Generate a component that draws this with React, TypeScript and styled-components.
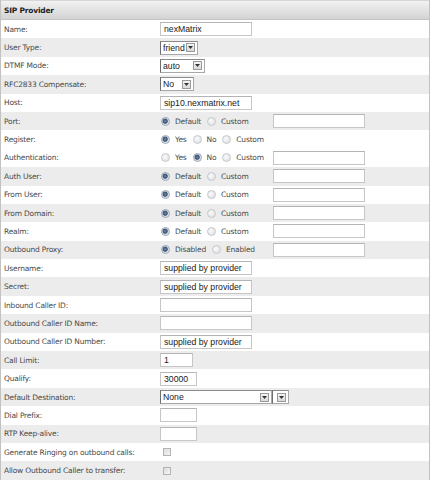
import React from "react";
import styled, { createGlobalStyle } from "styled-components";

const GlobalStyle = createGlobalStyle`
  html, body { margin: 0; padding: 0; background: #ffffff; }
  body { font-family: "DejaVu Sans", Verdana, sans-serif; }
`;

const Panel = styled.div`
  width: 430px;
  box-sizing: border-box;
  border-left: 1px solid #c2c2c2;
  border-right: 1px solid #c2c2c2;
  background: #ffffff;
`;

const Header = styled.div`
  height: 20px;
  box-sizing: border-box;
  display: flex;
  align-items: center;
  padding-left: 3px;
  border-top: 1px solid #d6d6d6;
  border-bottom: 1px solid #c4c4c4;
  background: linear-gradient(#f2f2f2, #d3d3d3);
  font-family: "DejaVu Sans", Verdana, sans-serif;
  font-weight: bold;
  font-size: 7.5px;
  letter-spacing: -0.2px;
  color: #1e1e1e;
`;

const Row = styled.div<{ $alt: boolean }>`
  height: 18.4px;
  display: grid;
  grid-template-columns: 159px 1fr;
  align-items: center;
  background: ${(p) => (p.$alt ? "#ececec" : "#ffffff")};
`;

const Label = styled.div`
  padding-left: 3px;
  font-size: 7.5px;
  letter-spacing: -0.2px;
  color: #4a4a4a;
  white-space: nowrap;
`;

const Cell = styled.div`
  display: flex;
  align-items: center;
  height: 100%;
`;

const TextBox = styled.input<{ $w: number }>`
  width: ${(p) => p.$w}px;
  height: 14px;
  box-sizing: border-box;
  margin: 0;
  padding: 0 0 0 3px;
  border: 1px solid #c6c6c6;
  border-top-color: #b4b4b4;
  background: #ffffff;
  font-family: "Liberation Sans", Arial, sans-serif;
  font-size: 8.7px;
  color: #1a1a1a;
  outline: none;
`;

const SelectBox = styled.div<{ $w: number }>`
  width: ${(p) => p.$w}px;
  height: 14px;
  box-sizing: border-box;
  display: flex;
  align-items: center;
  justify-content: space-between;
  padding: 0 2px 0 2px;
  border: 1px solid #a8a8a8;
  border-left-color: #6e6e6e;
  border-top-color: #8a8a8a;
  background: #ffffff;
  font-family: "Liberation Sans", Arial, sans-serif;
  font-size: 8.7px;
  color: #1a1a1a;
`;

const DropButton = styled.span`
  width: 9px;
  height: 9px;
  box-sizing: border-box;
  display: flex;
  align-items: center;
  justify-content: center;
  border: 1px solid #9a9a9a;
  background: linear-gradient(#f4f4f4, #d9d9d9);
`;

const SelectGroup = styled.div`
  display: flex;
  align-items: center;
`;

const RadioSet = styled.div`
  width: 113px;
  display: flex;
  align-items: center;
`;

const RadioDot = styled.span<{ $on: boolean }>`
  width: 9px;
  height: 9px;
  box-sizing: border-box;
  border-radius: 50%;
  margin-left: 1px;
  margin-right: 5px;
  border: 1px solid ${(p) => (p.$on ? "#9aa6b4" : "#c4c8cc")};
  background: ${(p) =>
    p.$on
      ? "radial-gradient(circle at 45% 45%, #6f86a6 0, #3b5272 2.2px, #c9d2dd 2.9px, #eef1f4 4px)"
      : "radial-gradient(circle at 40% 40%, #fafafa 0, #e4e6e8 4px)"};
`;

const OptText = styled.span`
  font-size: 7.5px;
  letter-spacing: -0.2px;
  color: #4a4a4a;
  margin-right: 5px;
  white-space: nowrap;
`;

const CheckBox = styled.span`
  width: 8px;
  height: 8px;
  box-sizing: border-box;
  margin-left: 3px;
  border: 1px solid #b4b4b4;
  background: linear-gradient(135deg, #dcdcdc, #f4f4f4);
`;

const Arrow = () => (
  <svg width="5" height="3" viewBox="0 0 5 3">
    <path d="M0 0 H5 L2.5 3 Z" fill="#333" />
  </svg>
);

const Select = ({ w, text }: { w: number; text: string }) => (
  <SelectBox $w={w}>
    <span>{text}</span>
    <DropButton>
      <Arrow />
    </DropButton>
  </SelectBox>
);

type Opt = { text: string; on?: boolean };

const Radios = ({ opts }: { opts: Opt[] }) => (
  <RadioSet>
    {opts.map((o) => (
      <React.Fragment key={o.text}>
        <RadioDot $on={!!o.on} />
        <OptText>{o.text}</OptText>
      </React.Fragment>
    ))}
  </RadioSet>
);

const defCustom: Opt[] = [{ text: "Default", on: true }, { text: "Custom" }];

type Field = { label: string; alt: boolean; control: React.ReactNode };

const fields: Field[] = [
  { label: "Name:", alt: false, control: <TextBox $w={92} readOnly value="nexMatrix" /> },
  { label: "User Type:", alt: true, control: <Select w={38} text="friend" /> },
  { label: "DTMF Mode:", alt: false, control: <Select w={45} text="auto" /> },
  { label: "RFC2833 Compensate:", alt: true, control: <Select w={34} text="No" /> },
  { label: "Host:", alt: false, control: <TextBox $w={92} readOnly value="sip10.nexmatrix.net" /> },
  {
    label: "Port:",
    alt: true,
    control: (
      <>
        <Radios opts={defCustom} />
        <TextBox $w={92} readOnly value="" />
      </>
    ),
  },
  {
    label: "Register:",
    alt: false,
    control: <Radios opts={[{ text: "Yes", on: true }, { text: "No" }, { text: "Custom" }]} />,
  },
  {
    label: "Authentication:",
    alt: false,
    control: (
      <>
        <Radios opts={[{ text: "Yes" }, { text: "No", on: true }, { text: "Custom" }]} />
        <TextBox $w={92} readOnly value="" />
      </>
    ),
  },
  {
    label: "Auth User:",
    alt: true,
    control: (
      <>
        <Radios opts={defCustom} />
        <TextBox $w={92} readOnly value="" />
      </>
    ),
  },
  {
    label: "From User:",
    alt: false,
    control: (
      <>
        <Radios opts={defCustom} />
        <TextBox $w={92} readOnly value="" />
      </>
    ),
  },
  {
    label: "From Domain:",
    alt: true,
    control: (
      <>
        <Radios opts={defCustom} />
        <TextBox $w={92} readOnly value="" />
      </>
    ),
  },
  {
    label: "Realm:",
    alt: false,
    control: (
      <>
        <Radios opts={defCustom} />
        <TextBox $w={92} readOnly value="" />
      </>
    ),
  },
  {
    label: "Outbound Proxy:",
    alt: true,
    control: (
      <>
        <Radios opts={[{ text: "Disabled", on: true }, { text: "Enabled" }]} />
        <TextBox $w={92} readOnly value="" />
      </>
    ),
  },
  { label: "Username:", alt: false, control: <TextBox $w={92} readOnly value="supplied by provider" /> },
  { label: "Secret:", alt: true, control: <TextBox $w={92} readOnly value="supplied by provider" /> },
  { label: "Inbound Caller ID:", alt: false, control: <TextBox $w={92} readOnly value="" /> },
  { label: "Outbound Caller ID Name:", alt: true, control: <TextBox $w={92} readOnly value="" /> },
  {
    label: "Outbound Caller ID Number:",
    alt: false,
    control: <TextBox $w={92} readOnly value="supplied by provider" />,
  },
  { label: "Call Limit:", alt: true, control: <TextBox $w={33} readOnly value="1" /> },
  { label: "Qualify:", alt: false, control: <TextBox $w={37} readOnly value="30000" /> },
  {
    label: "Default Destination:",
    alt: true,
    control: (
      <SelectGroup>
        <Select w={112} text="None" />
        <Select w={17} text="" />
      </SelectGroup>
    ),
  },
  { label: "Dial Prefix:", alt: false, control: <TextBox $w={37} readOnly value="" /> },
  { label: "RTP Keep-alive:", alt: true, control: <TextBox $w={37} readOnly value="" /> },
  { label: "Generate Ringing on outbound calls:", alt: false, control: <CheckBox /> },
  { label: "Allow Outbound Caller to transfer:", alt: true, control: <CheckBox /> },
];

export default function App() {
  return (
    <>
      <GlobalStyle />
      <Panel>
        <Header>SIP Provider</Header>
        {fields.map((f) => (
          <Row key={f.label} $alt={f.alt}>
            <Label>{f.label}</Label>
            <Cell>{f.control}</Cell>
          </Row>
        ))}
      </Panel>
    </>
  );
}
